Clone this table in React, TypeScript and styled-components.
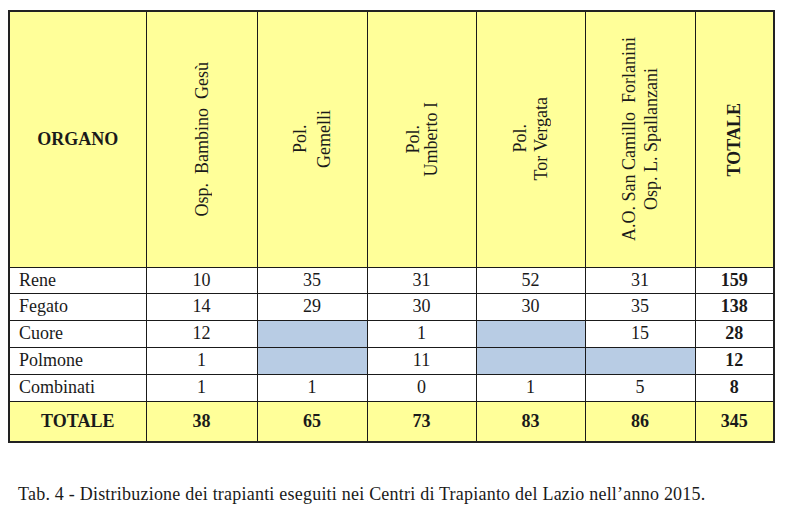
import React from "react";
import styled, { createGlobalStyle } from "styled-components";

const serif = `"Liberation Serif", "Times New Roman", Times, serif`;

const Global = createGlobalStyle`
  html, body { margin: 0; padding: 0; background: #ffffff; }
  body { font-family: ${serif}; color: #1a1a1a; }
`;

const Page = styled.div`
  padding: 10px 8px 0 8px;
  width: 800px;
  box-sizing: border-box;
  font-family: ${serif};
`;

const Table = styled.table`
  border-collapse: collapse;
  table-layout: fixed;
  width: 765px;
  font-family: ${serif};
  font-size: 18px;
  color: #1a1a1a;
  border: 2px solid #222;
`;

const HeadRow = styled.tr`
  height: 256px;
  background: #ffff99;
`;

const HeadCell = styled.th<{ $bold?: boolean }>`
  border: 1px solid #1a1a1a;
  padding: 0;
  vertical-align: middle;
  text-align: center;
  font-family: ${serif};
  font-size: 18px;
  font-weight: ${(p) => (p.$bold ? 700 : 400)};
`;

const Rotated = styled.div<{ $bold?: boolean; $lh?: number }>`
  writing-mode: vertical-rl;
  transform: rotate(180deg);
  margin: 0 auto;
  font-family: ${serif};
  font-size: 18px;
  line-height: ${(p) => p.$lh ?? 22}px;
  font-weight: ${(p) => (p.$bold ? 700 : 400)};
  text-align: center;
  white-space: pre;
`;

const BodyRow = styled.tr<{ $total?: boolean; $h?: number }>`
  height: ${(p) => (p.$total ? 41 : p.$h ?? 27)}px;
  background: ${(p) => (p.$total ? "#ffff99" : "#ffffff")};
`;

const NameCell = styled.td<{ $total?: boolean }>`
  border: 1px solid #1a1a1a;
  padding: ${(p) => (p.$total ? "0" : "0 0 0 9px")};
  text-align: ${(p) => (p.$total ? "center" : "left")};
  font-family: ${serif};
  font-size: 18px;
  font-weight: ${(p) => (p.$total ? 700 : 400)};
`;

const NumCell = styled.td<{ $bold?: boolean; $blank?: boolean }>`
  border: 1px solid #1a1a1a;
  padding: 0;
  text-align: center;
  font-family: ${serif};
  font-size: 18px;
  font-weight: ${(p) => (p.$bold ? 700 : 400)};
  background: ${(p) => (p.$blank ? "#b8cce4" : "transparent")};
`;

const Caption = styled.p`
  margin: 40px 0 0 10px;
  font-family: ${serif};
  font-size: 18px;
  line-height: 22px;
  letter-spacing: 0.22px;
  color: #1a1a1a;
`;

const headers: { text: string; bold?: boolean; lh?: number }[] = [
  { text: "Osp.  Bambino  Gesù" },
  { text: "Pol.\nGemelli", lh: 24 },
  { text: "Pol.\nUmberto I", lh: 18 },
  { text: "Pol.\nTor Vergata", lh: 21 },
  { text: "A.O. San Camillo  Forlanini\nOsp. L. Spallanzani", lh: 22 },
  { text: "TOTALE", bold: true },
];

const rows: { name: string; values: (number | null)[]; total: number }[] = [
  { name: "Rene", values: [10, 35, 31, 52, 31], total: 159 },
  { name: "Fegato", values: [14, 29, 30, 30, 35], total: 138 },
  { name: "Cuore", values: [12, null, 1, null, 15], total: 28 },
  { name: "Polmone", values: [1, null, 11, null, null], total: 12 },
  { name: "Combinati", values: [1, 1, 0, 1, 5], total: 8 },
];

const totals = [38, 65, 73, 83, 86, 345];
const widths = [137, 111, 110, 109, 109, 110, 79];

export default function App() {
  return (
    <>
      <Global />
      <Page>
        <Table>
          <colgroup>
            {widths.map((w, i) => (
              <col key={i} style={{ width: w }} />
            ))}
          </colgroup>
          <thead>
            <HeadRow>
              <HeadCell $bold>ORGANO</HeadCell>
              {headers.map((h, i) => (
                <HeadCell key={i}>
                  <Rotated $bold={h.bold} $lh={h.lh}>
                    {h.text}
                  </Rotated>
                </HeadCell>
              ))}
            </HeadRow>
          </thead>
          <tbody>
            {rows.map((r, idx) => (
              <BodyRow key={r.name} $h={idx === 0 ? 26 : 27}>
                <NameCell>{r.name}</NameCell>
                {r.values.map((v, i) => (
                  <NumCell key={i} $blank={v === null}>
                    {v ?? ""}
                  </NumCell>
                ))}
                <NumCell $bold>{r.total}</NumCell>
              </BodyRow>
            ))}
            <BodyRow $total>
              <NameCell $total>TOTALE</NameCell>
              {totals.map((t, i) => (
                <NumCell key={i} $bold>
                  {t}
                </NumCell>
              ))}
            </BodyRow>
          </tbody>
        </Table>
        <Caption>
          Tab. 4 - Distribuzione dei trapianti eseguiti nei Centri di Trapianto del Lazio nell’anno 2015.
        </Caption>
      </Page>
    </>
  );
}
